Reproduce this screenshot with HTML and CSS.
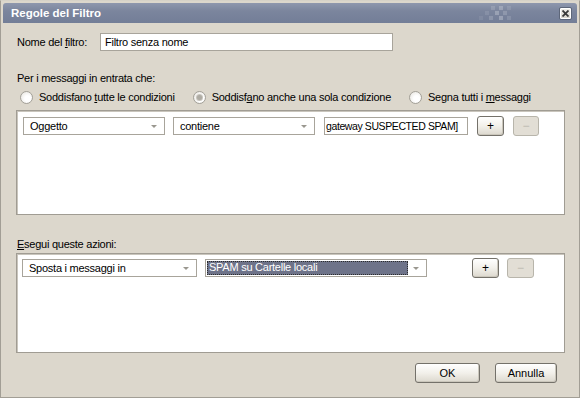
FILE: index.html
```html
<!DOCTYPE html>
<html lang="it">
<head>
<meta charset="utf-8">
<title>Regole del Filtro</title>
<link rel="stylesheet" href="styles.css">
</head>
<body>
<div class="window">
  <div class="titlebar">
    <span class="title">Regole del Filtro</span>
    <svg class="deco" width="34" height="17" viewBox="0 0 34 17">
      <g fill="#ffffff">
        <rect x="14" y="1" width="4" height="4" opacity="0.14"/>
        <rect x="22" y="1" width="4" height="4" opacity="0.22"/>
        <rect x="30" y="1" width="4" height="4" opacity="0.1"/>
        <rect x="8" y="6" width="4" height="4" opacity="0.1"/>
        <rect x="18" y="6" width="4" height="4" opacity="0.24"/>
        <rect x="26" y="6" width="4" height="4" opacity="0.16"/>
        <rect x="2" y="11" width="4" height="4" opacity="0.08"/>
        <rect x="12" y="11" width="4" height="4" opacity="0.16"/>
        <rect x="22" y="11" width="4" height="4" opacity="0.26"/>
        <rect x="30" y="11" width="4" height="4" opacity="0.12"/>
      </g>
    </svg>
    <span class="close">
      <svg width="7" height="7" viewBox="0 0 7 7"><path d="M0.5 0.5 L6.5 6.5 M6.5 0.5 L0.5 6.5" stroke="#3a3a3a" stroke-width="1.8"/></svg>
    </span>
  </div>
  <div class="client">
    <div class="name-row">
      <span class="label">Nome del <u>f</u>iltro:</span>
      <div class="textbox name-box">Filtro senza nome</div>
    </div>
    <div class="caption first">Per i messaggi in entrata che:</div>
    <div class="radios">
      <span class="radio"><span class="circle"></span><span class="rtext">Soddisfano <u>t</u>utte le condizioni</span></span>
      <span class="radio"><span class="circle checked"></span><span class="rtext">Soddisf<u>a</u>no anche una sola condizione</span></span>
      <span class="radio"><span class="circle"></span><span class="rtext">Segna tutti i <u>m</u>essaggi</span></span>
    </div>
    <div class="listbox conditions">
      <div class="rule-row">
        <div class="select w142">Oggetto<span class="arrow"></span></div>
        <div class="select w142">contiene<span class="arrow"></span></div>
        <div class="textbox value-box">gateway SUSPECTED SPAM]</div>
        <span class="btn small">+</span>
        <span class="btn small disabled">−</span>
      </div>
    </div>
    <div class="caption second"><u>E</u>segui queste azioni:</div>
    <div class="listbox actions">
      <div class="rule-row action-row">
        <div class="select w175">Sposta i messaggi in<span class="arrow"></span></div>
        <div class="select folder"><span class="selected">SPAM su Cartelle locali</span><span class="arrow"></span></div>
        <span class="btn small plus2">+</span>
        <span class="btn small disabled">−</span>
      </div>
    </div>
    <div class="footer">
      <span class="btn ok">OK</span>
      <span class="btn cancel">Annulla</span>
    </div>
  </div>
</div>
</body>
</html>
```

FILE: styles.css
```css
* { box-sizing: border-box; }
html, body {
  margin: 0;
  padding: 0;
  background: #ffffff;
  overflow: hidden;
}
body {
  width: 584px;
  height: 402px;
  font-family: "Liberation Sans", Arial, sans-serif;
  font-size: 11px;
  letter-spacing: -0.25px;
  color: #000;
}
u { text-decoration: underline; text-underline-offset: 1px; }

.window {
  width: 580px;
  height: 398px;
  background: #dcd7cc;
  border: 1px solid #a29e95;
  border-top-color: #d6d2c8;
  padding: 2px;
  display: flex;
  flex-direction: column;
}

.titlebar {
  height: 20px;
  flex: none;
  display: flex;
  align-items: center;
  background: linear-gradient(to bottom, #8e97ad 0%, #7b859d 40%, #737e97 100%);
  border-radius: 3px 3px 0 0;
  padding: 0 5px 0 8px;
}
.title {
  color: #fff;
  font-weight: bold;
  font-size: 11.5px;
  letter-spacing: 0;
}
.deco { margin-left: auto; margin-right: 48px; }
.close {
  width: 13px;
  height: 13px;
  display: flex;
  align-items: center;
  justify-content: center;
  background: linear-gradient(to bottom, #f4f2ee, #d8d4cb);
  border: 1px solid #5d6679;
  border-radius: 2px;
  box-shadow: inset 0 0 0 1px #fff;
}

.client {
  flex: 1;
  display: flex;
  flex-direction: column;
  padding: 0 12px 0 13px;
}

.name-row {
  display: flex;
  align-items: center;
  margin-top: 10px;
  height: 18px;
}
.label { width: 84px; padding-left: 1px; }

.textbox {
  height: 18px;
  background: #fff;
  border: 1px solid #a8a49b;
  padding: 0 4px;
  line-height: 16px;
  white-space: nowrap;
  overflow: hidden;
}
.name-box { width: 293px; }

.caption { padding-left: 1px; line-height: 14px; }
.caption.first { margin-top: 20px; }
.caption.second { margin-top: 22px; }

.radios {
  display: flex;
  align-items: center;
  height: 16px;
  margin-top: 4px;
  padding-left: 4px;
}
.radio { display: flex; align-items: center; }
.radio + .radio { margin-left: 18px; }
.rtext { white-space: nowrap; }
.circle {
  width: 13px;
  height: 13px;
  border-radius: 50%;
  border: 1px solid #a3a098;
  background: radial-gradient(circle at 60% 60%, #ffffff 30%, #e4e1da 100%);
  margin-right: 6px;
  display: flex;
  align-items: center;
  justify-content: center;
}
.circle.checked::after {
  content: "";
  width: 5px;
  height: 5px;
  border-radius: 50%;
  background: #aeaba3;
  box-shadow: 0 0 0 1px #c8c5be;
}

.listbox {
  width: 549px;
  background: #fff;
  border: 1px solid #a09c93;
  box-shadow: inset 1px 1px 0 #c9c5bc;
}
.conditions { height: 105px; margin-top: 5px; }
.actions { height: 100px; margin-top: 2px; }

.rule-row {
  display: flex;
  align-items: center;
  height: 20px;
  margin: 5px 0 0 6px;
}
.action-row { margin: 4px 0 0 5px; }

.select {
  position: relative;
  height: 18px;
  background: #fff;
  border: 1px solid #a8a49b;
  padding: 0 4px 0 6px;
  line-height: 16px;
  white-space: nowrap;
  margin-right: 8px;
}
.w142 { width: 142px; }
.w175 { width: 175px; }
.arrow {
  position: absolute;
  right: 7px;
  top: 7px;
  width: 0;
  height: 0;
  border-left: 3px solid transparent;
  border-right: 3px solid transparent;
  border-top: 3px solid #9a978f;
}
.value-box {
  width: 144px;
  margin-left: 1px;
  padding: 0 1px;
  font-size: 10.5px;
  letter-spacing: -0.4px;
}

.folder {
  width: 222px;
  padding: 1px;
  margin-right: 45px;
}
.selected {
  display: block;
  width: 201px;
  height: 14px;
  line-height: 13px;
  background: #6e7389;
  color: #fff;
  outline: 1px dotted #2c2c2c;
  outline-offset: -1px;
  padding-left: 2px;
}

.btn {
  display: flex;
  align-items: center;
  justify-content: center;
  height: 20px;
  border: 1px solid #74716a;
  border-radius: 3px;
  background: linear-gradient(to bottom, #ffffff 0%, #f2f0ea 50%, #dcd8ce 100%);
  box-shadow: inset -1px -1px 0 #cbc7bc;
  color: #000;
  letter-spacing: 0;
}
.btn.small { width: 27px; font-size: 12px; }
.conditions .btn.small:first-of-type { margin-left: 9px; }
.conditions .btn.small + .btn.small { margin-left: 9px; width: 26px; }
.plus2 + .btn.small { margin-left: 8px; }
.btn.disabled {
  border-color: #b8b5ab;
  background: #e2ded5;
  box-shadow: none;
  color: #bcb9b0;
}

.footer {
  display: flex;
  justify-content: flex-end;
  margin-top: 10px;
  padding-right: 8px;
}
.ok { width: 65px; }
.cancel { width: 62px; margin-left: 15px; }
```
